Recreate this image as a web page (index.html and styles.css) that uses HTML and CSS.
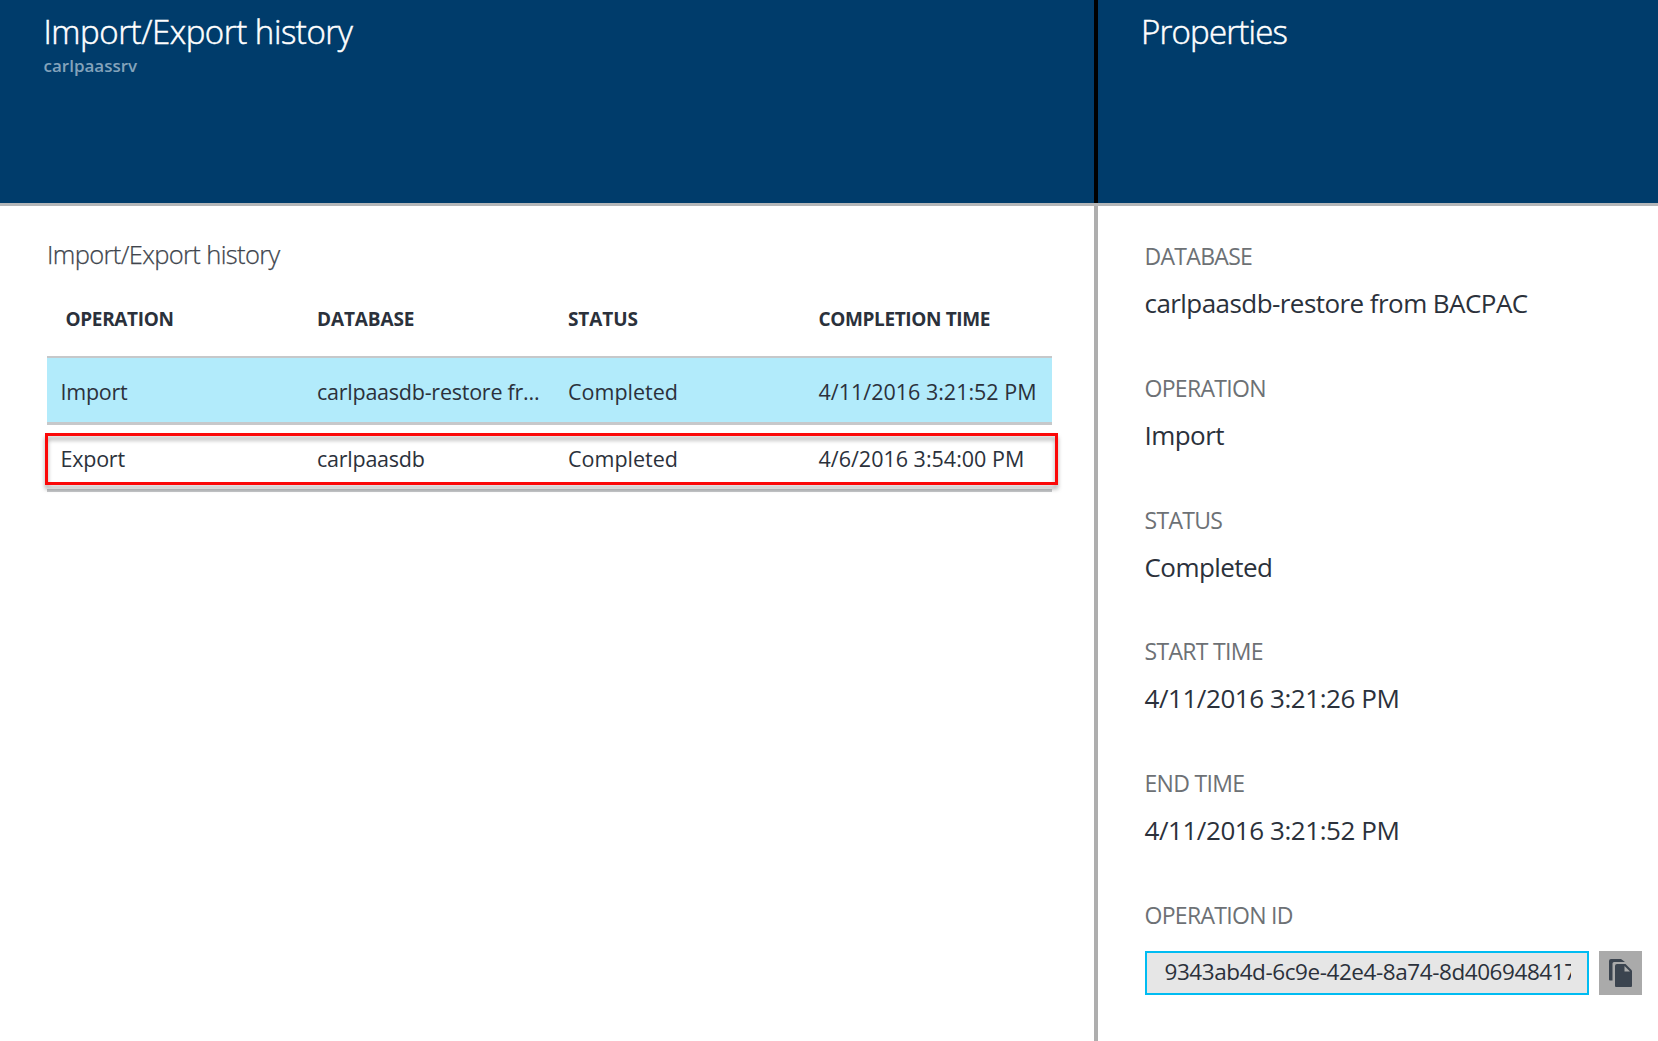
FILE: index.html
```html
<!DOCTYPE html>
<html lang="en">
<head>
<meta charset="utf-8">
<title>Import/Export history</title>
<link rel="stylesheet" href="styles.css">
</head>
<body>
<main class="blades">
  <section class="blade history">
    <header class="blade-header">
      <h1 class="blade-title">Import/Export history</h1>
      <p class="blade-subtitle">carlpaassrv</p>
    </header>
    <div class="history-body">
      <h2 class="section-title">Import/Export history</h2>
      <div class="row row-head">
        <span class="head-operation">OPERATION</span>
        <span class="head-database">DATABASE</span>
        <span class="head-status">STATUS</span>
        <span class="head-time">COMPLETION TIME</span>
      </div>
      <div class="row row-item selected">
        <span class="operation">Import</span>
        <span class="database">carlpaasdb-restore fr...</span>
        <span>Completed</span>
        <span>4/11/2016 3:21:52 PM</span>
      </div>
      <div class="row row-item last">
        <span class="operation">Export</span>
        <span class="database">carlpaasdb</span>
        <span>Completed</span>
        <span>4/6/2016 3:54:00 PM</span>
        <div class="highlight"></div>
      </div>
    </div>
  </section>
  <section class="blade properties">
    <header class="blade-header">
      <h1 class="blade-title">Properties</h1>
    </header>
    <dl class="property-list">
      <div><dt>DATABASE</dt><dd>carlpaasdb-restore from BACPAC</dd></div>
      <div><dt>OPERATION</dt><dd>Import</dd></div>
      <div><dt>STATUS</dt><dd>Completed</dd></div>
      <div><dt>START TIME</dt><dd class="time">4/11/2016 3:21:26 PM</dd></div>
      <div><dt>END TIME</dt><dd class="time">4/11/2016 3:21:52 PM</dd></div>
      <div>
        <dt>OPERATION ID</dt>
        <dd class="copy-field">
          <div class="copy-box"><div class="copy-text">9343ab4d-6c9e-42e4-8a74-8d406948417</div></div>
          <button class="copy-button" aria-label="Copy">
            <svg width="43" height="44" viewBox="0 0 43 44">
              <path d="M10 10q0-2 2-2h10l4 3H15q-1.500 0-1.500 1.500V29.500H11q-1 0-1-1z" fill="#3b444f"/>
              <path d="M16 15q0-2 2-2h8.500l6.500 6.500V35q0 1-1 1H17q-1 0-1-1z" fill="#3b444f"/>
              <path d="M25.500 15v5.500H31z" fill="#aaa"/>
            </svg>
          </button>
        </dd>
      </div>
    </dl>
  </section>
</main>
</body>
</html>
```
FILE: styles.css
```css
* { box-sizing: border-box; margin: 0; padding: 0; }
body { font-family: "Open Sans", sans-serif; background: #fff; color: #2b313b; overflow: hidden; }

.blades { display: flex; width: 1658px; height: 1041px; }
.blade { display: flex; flex-direction: column; white-space: nowrap; }
.history { width: 1094px; }
.properties { flex: 1; min-width: 0; }

.blade-header { height: 203px; padding: 10px 0 0 43.5px; background: #003c6b; color: #fff; }
.properties .blade-header { border-left: 4px solid #000; padding-left: 43px; }
.blade-title { font-size: 33px; line-height: 44px; font-weight: 300; letter-spacing: -.45px; -webkit-text-stroke: .5px #fff; }
.properties .blade-title { letter-spacing: -.8px; }
.blade-subtitle { font-size: 17px; line-height: 24px; font-weight: 600; color: #84a3bb; }

.history-body { flex: 1; border-top: 3px solid #b4b6b8; padding: 30px 42px 0 47px; }
.section-title { font-size: 25.5px; line-height: 36px; font-weight: 300; letter-spacing: -.64px; color: #40454d; -webkit-text-stroke: .25px #40454d; }

.row { display: grid; grid-template-columns: 270px 251px 250.5px 1fr; }
.row-head { height: 84px; padding-top: 10px; font-size: 19px; line-height: 74px; font-weight: 700; }
.head-operation { padding-left: 18.5px; letter-spacing: -.35px; }
.head-database { letter-spacing: -.13px; }
.head-status { letter-spacing: -.1px; }
.head-time { letter-spacing: -.37px; }

.row-item { position: relative; font-size: 21.5px; }
.selected { height: 69px; line-height: 67px; border-top: 2px solid #c6c8ca; background: linear-gradient(#c6c8ca, #c6c8ca) 0 64px / 100% 3px no-repeat #b2ebfb; }
.last { height: 67px; line-height: 67px; border-bottom: 3px solid #c6c8ca; }
.operation { padding-left: 13.5px; letter-spacing: -.24px; }
.database { letter-spacing: -.24px; }
.highlight { position: absolute; left: -2px; top: 8px; width: 1013px; height: 52px; border: 3px solid #fb0808; filter: drop-shadow(0 4px 2px rgba(0, 0, 0, .34)); }

.property-list { flex: 1; border-top: 3px solid #b4b6b8; padding: 35px 16px 0 50.5px; display: flex; flex-direction: column; gap: 51.8px; background: linear-gradient(#aeaeae, #aeaeae) 0 0 / 4px 100% no-repeat; }
dt { font-size: 23px; line-height: 30px; margin-bottom: 14px; letter-spacing: -.7px; color: #6d7175; }
dd { font-size: 26px; line-height: 36px; letter-spacing: -.56px; }
dd.time { letter-spacing: -.44px; }

.copy-field { display: flex; gap: 10px; padding-top: 7px; }
.copy-box { width: 444.5px; height: 44px; padding: 0 16px 0 18px; border: 2px solid #00bcf2; background: #e6e6e6; }
.copy-text { overflow: hidden; font-size: 22.5px; line-height: 38px; letter-spacing: -.43px; }
.copy-button { width: 43px; height: 44px; border: 0; background: #aaa; }
.copy-button svg { display: block; }
```
